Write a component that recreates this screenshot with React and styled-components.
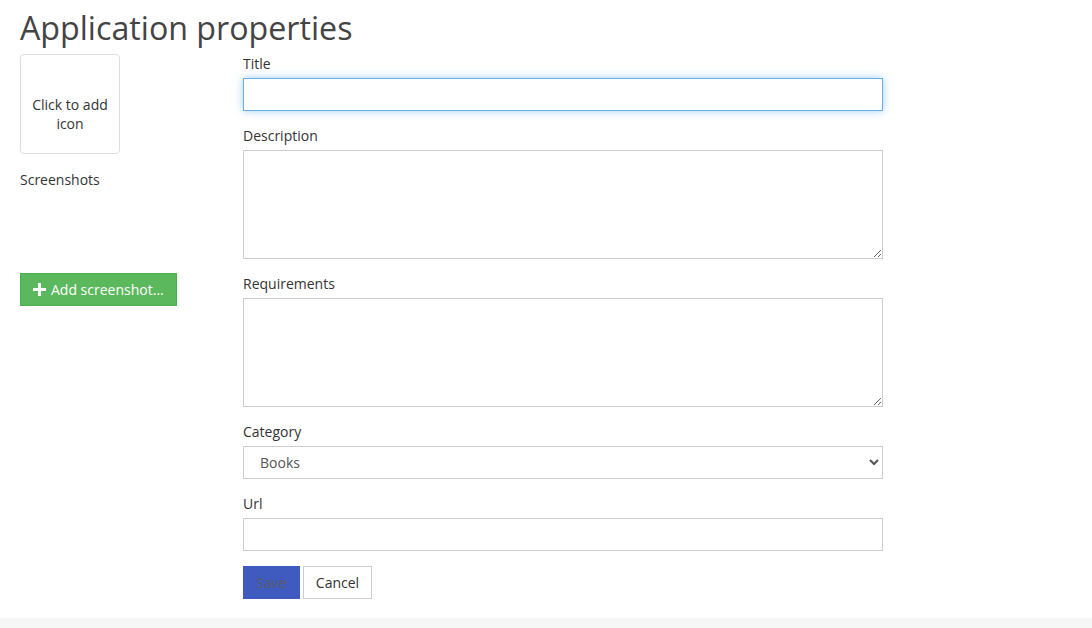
import styled, { createGlobalStyle } from "styled-components"

const Global = createGlobalStyle`
body{
    margin:0;
    background:#fff;
    font-family: "Open Sans", "Liberation Sans", sans-serif;
    color:#333;
}
`

const Page = styled.div`
min-height: 628px;
display:flex;
flex-direction: column;
`

const Main = styled.main`
flex:1;
padding: 0 20px;
`

const Heading = styled.h1`
margin: 0;
padding-top: 6px;
font-size: 32.2px;
line-height: 44px;
font-weight: 400;
color:#444;
height: 48px;
`

const Columns = styled.div`
display:flex;
`

const Side = styled.aside`
width: 223px;
display:flex;
flex-direction: column;
align-items:flex-start;
`

const IconBox = styled.div`
box-sizing: border-box;
width:100px;
height:100px;
border:1px solid #ddd;
border-radius: 4px;
background:#fff;
font-size:14px;
line-height: 19px;
color:#333;
padding: 40px 8px 0;
text-align:center;
cursor:pointer;
`

const SideLabel = styled.div`
margin-top: 16px;
font-size:14px;
font-weight:500;
line-height:20px;
`

const AddButton = styled.button`
margin-top: 83px;
width:157px;
height:33px;
background:#5cb85c;
border:1px solid #4cae4c;
color:#fff;
font-family: inherit;
font-size:14px;
display:flex;
align-items:center;
gap:5px;
padding: 0 12px;
cursor:pointer;
`

const Form = styled.form`
width:640px;
display:flex;
flex-direction: column;
`

const Field = styled.div`
display:flex;
flex-direction: column;
gap:4px;
margin-bottom: 15px;
`

const Label = styled.label`
font-size:14px;
font-weight:500;
line-height:20px;
color:#333;
`

const Input = styled.input`
box-sizing: border-box;
height: 33px;
border:1px solid ${p => p.$focus ? "#66afe9" : "#ccc"};
box-shadow: ${p => p.$focus ? "0 0 8px rgba(102,175,233,0.6)" : "none"};
outline:none;
padding: 0 12px;
font-family: inherit;
font-size:14px;
`

const Area = styled.textarea`
box-sizing: border-box;
height:109px;
border:1px solid #ccc;
padding: 6px 12px;
font-family: inherit;
font-size:14px;
resize: vertical;
`

const Select = styled.select`
box-sizing: border-box;
height:33px;
border:1px solid #ccc;
background:#fff;
padding: 0 12px;
font-family: inherit;
font-size:14px;
color:#555;
`

const Actions = styled.div`
display:flex;
gap:3px;
margin-bottom: 19px;
`

const Btn = styled.button`
height:33px;
width:${p => p.$w}px;
padding: 0;
font-family: inherit;
font-size:14px;
border:1px solid ${p => p.$primary ? "#3f5bbf" : "#ccc"};
background:${p => p.$primary ? "#3f5bbf" : "#fff"};
color:${p => p.$primary ? "#5a5a6a" : "#333"};
cursor:pointer;
`

const Footer = styled.footer`
height:10px;
background:#f6f6f6;
`

export default function App(){
    return(
        <Page>
            <Global/>
            <Main>
                <Heading>Application properties</Heading>
                <Columns>
                    <Side>
                        <IconBox>Click to add icon</IconBox>
                        <SideLabel>Screenshots</SideLabel>
                        <AddButton type="button">
                            <svg width="13" height="13" viewBox="0 0 13 13">
                                <path d="M5 0h3v5h5v3H8v5H5V8H0V5h5z" fill="#fff"/>
                            </svg>
                            Add screenshot...
                        </AddButton>
                    </Side>
                    <Form>
                        <Field>
                            <Label>Title</Label>
                            <Input $focus defaultValue="" />
                        </Field>
                        <Field>
                            <Label>Description</Label>
                            <Area/>
                        </Field>
                        <Field>
                            <Label>Requirements</Label>
                            <Area/>
                        </Field>
                        <Field>
                            <Label>Category</Label>
                            <Select defaultValue="Books">
                                <option>Books</option>
                            </Select>
                        </Field>
                        <Field>
                            <Label>Url</Label>
                            <Input/>
                        </Field>
                        <Actions>
                            <Btn $primary $w={57} type="button">Save</Btn>
                            <Btn $w={69} type="button">Cancel</Btn>
                        </Actions>
                    </Form>
                </Columns>
            </Main>
            <Footer/>
        </Page>
    )
}
